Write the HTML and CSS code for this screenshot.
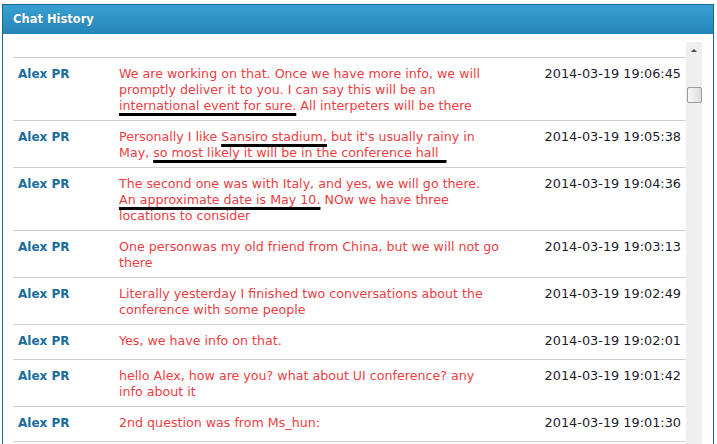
FILE: index.html
```html
<!DOCTYPE html>
<html lang="en">
<head>
    <meta charset="UTF-8">
    <title>Chat History</title>
    <link rel="stylesheet" href="styles.css">
</head>
<body>
    <div class="panel">
        <div class="panel-header">Chat History</div>
        <div class="panel-body">
            <div class="scroll-area">
                <table class="chat-table">
                    <colgroup>
                        <col class="col-name">
                        <col class="col-msg">
                        <col class="col-date">
                    </colgroup>
                    <thead>
                        <tr><th></th><th></th><th></th></tr>
                    </thead>
                    <tbody>
                        <tr>
                            <td class="name">Alex PR</td>
                            <td class="msg">We are working on that. Once we have more info, we will promptly deliver it to you. I can say this will be an <span class="mark">international event for sure.</span> All interpeters will be there</td>
                            <td class="date">2014-03-19 19:06:45</td>
                        </tr>
                        <tr>
                            <td class="name">Alex PR</td>
                            <td class="msg">Personally I like <span class="mark">Sansiro stadium,</span> but it's usually rainy in May, <span class="mark">so most likely it will be in the conference hall&nbsp;&nbsp;</span></td>
                            <td class="date">2014-03-19 19:05:38</td>
                        </tr>
                        <tr>
                            <td class="name">Alex PR</td>
                            <td class="msg">The second one was with Italy, and yes, we will go there. <span class="mark">An approximate date is May 10.</span> NOw we have three locations to consider</td>
                            <td class="date">2014-03-19 19:04:36</td>
                        </tr>
                        <tr>
                            <td class="name">Alex PR</td>
                            <td class="msg">One personwas my old friend from China, but we will not go there</td>
                            <td class="date">2014-03-19 19:03:13</td>
                        </tr>
                        <tr>
                            <td class="name">Alex PR</td>
                            <td class="msg">Literally yesterday I finished two conversations about the conference with some people</td>
                            <td class="date">2014-03-19 19:02:49</td>
                        </tr>
                        <tr>
                            <td class="name">Alex PR</td>
                            <td class="msg">Yes, we have info on that.</td>
                            <td class="date">2014-03-19 19:02:01</td>
                        </tr>
                        <tr>
                            <td class="name">Alex PR</td>
                            <td class="msg">hello Alex, how are you? what about UI conference? any info about it</td>
                            <td class="date">2014-03-19 19:01:42</td>
                        </tr>
                        <tr>
                            <td class="name">Alex PR</td>
                            <td class="msg">2nd question was from Ms_hun:</td>
                            <td class="date">2014-03-19 19:01:30</td>
                        </tr>
                    </tbody>
                </table>
                <div class="scrollbar">
                    <div class="scroll-arrow"></div>
                    <div class="scroll-thumb"></div>
                </div>
            </div>
        </div>
    </div>
</body>
</html>
```

FILE: styles.css
```css
body {
    margin: 0;
    padding: 0;
    background-color: #fff;
    font-family: "DejaVu Sans", Verdana, sans-serif;
    overflow: hidden;
    height: 444px;
}
.panel {
    margin: 4px 0 0 2px;
    width: 710px;
    height: 600px;
    border: 1px solid #136a93;
    background-color: #fff;
}
.panel-header {
    height: 29px;
    line-height: 29px;
    padding-left: 10px;
    color: #fff;
    font-size: 11.5px;
    font-weight: bold;
    text-shadow: 0 0 1px rgba(0, 0, 0, 0.3);
    background: linear-gradient(#3aa0d2, #2584b8);
}
.panel-body {
    padding: 8px 11px 0 10px;
}
.scroll-area {
    display: flex;
    align-items: flex-start;
}
.chat-table {
    flex: 1;
    border-collapse: collapse;
    table-layout: fixed;
    font-size: 12.65px;
}
.col-name {
    width: 106px;
}
.col-msg {
    width: 385px;
}
.chat-table th {
    height: 15px;
    padding: 0;
}
.chat-table td {
    border-top: 1px solid #cfcfcf;
    padding: 8px 5px 6px 5px;
    line-height: 16px;
    height: 20px;
    vertical-align: top;
}
.chat-table tr:last-child td {
    border-bottom: 1px solid #cfcfcf;
}
.chat-table td.name {
    font-size: 12px;
}
.chat-table td.msg {
    padding-left: 0;
    color: #ec3e44;
}
.chat-table td.date {
    font-size: 12.85px;
}
.name {
    color: #1a6c9e;
    font-weight: bold;
}
.date {
    text-align: right;
    color: #1c1c2c;
}
.mark {
    text-decoration: underline;
    text-decoration-color: #000;
    text-decoration-thickness: 3px;
    text-decoration-skip-ink: none;
    text-underline-offset: 3px;
}
.scrollbar {
    width: 16px;
    height: 420px;
    background-color: #efefef;
}
.scroll-arrow {
    width: 0;
    height: 0;
    margin: 7px auto 0;
    border-left: 3px solid transparent;
    border-right: 3px solid transparent;
    border-bottom: 3px solid #444;
}
.scroll-thumb {
    margin: 35px 0 0 1px;
    width: 13px;
    height: 14px;
    border: 1px solid #9a9a9a;
    border-radius: 2px;
    background: linear-gradient(to right, #f7f7f7, #dcdcdc);
}
```
